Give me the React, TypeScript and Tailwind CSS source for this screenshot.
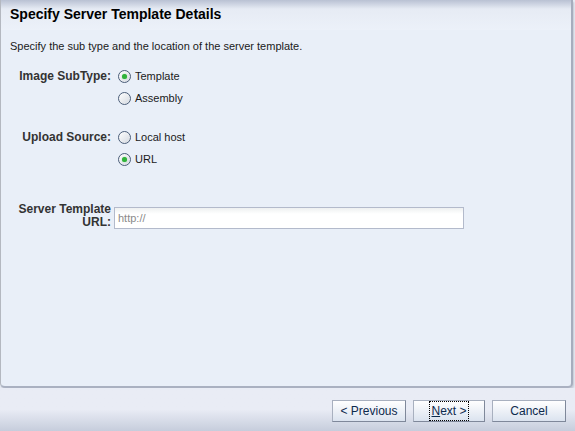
import React, { useState } from 'react';

const font = { fontFamily: '"Liberation Sans", Arial, sans-serif' };

type RadioProps = {
  label: string;
  checked: boolean;
  onSelect: () => void;
};

const Radio: React.FC<RadioProps> = ({ label, checked, onSelect }) => (
  <label className="flex items-center h-[18px] cursor-pointer" onClick={onSelect}>
    <span className="relative w-[13px] h-[13px] rounded-full border border-[#4a5d78] bg-gradient-to-br from-white to-[#d4d9e0] flex items-center justify-center shadow-[inset_0_0_1px_#ffffff]">
      {checked && (
        <span className="w-[5px] h-[5px] rounded-full bg-[#2fb23a] shadow-[0_0_1px_#6ad36f]" />
      )}
    </span>
    <span className="ml-[4px] text-[11px] text-[#1a1a1a]">{label}</span>
  </label>
);

const FooterButton: React.FC<{ width: string; children: React.ReactNode }> = ({ width, children }) => (
  <button
    className={`${width} h-[22px] border border-[#a8b0bf] border-b-[#7f889a] border-r-[#7f889a] bg-gradient-to-b from-white to-[#dbe3ef] text-[12px] text-[#0d2a4d] flex items-center justify-center`}
  >
    {children}
  </button>
);

const App: React.FC = () => {
  const [subType, setSubType] = useState<'template' | 'assembly'>('template');
  const [source, setSource] = useState<'local' | 'url'>('url');

  return (
    <div className="w-[575px] h-[431px] flex flex-col bg-[#e9edf5] overflow-hidden" style={font}>
      {/* wizard page panel */}
      <div className="w-[573px] h-[388px] shrink-0 flex flex-col bg-[#e9eff8] border-l border-r-2 border-b-2 border-l-[#b4b8c0] border-r-[#a6adbd] border-b-[#aab1c1] rounded-b-[5px] shadow-[1px_2px_2px_rgba(120,130,150,0.35)]">
        <div className="h-[30px] shrink-0 bg-gradient-to-b from-[#b9c1d3] via-[#e6ebf4] via-30% to-[#ecf1f9] flex items-end pl-[9px] pb-[9px]">
          <h1 className="text-[14px] font-bold text-black leading-none">Specify Server Template Details</h1>
        </div>

        <p className="mt-[10px] ml-[9px] text-[11px] text-[#1a1a1a] leading-[12px]">
          Specify the sub type and the location of the server template.
        </p>

        <div className="mt-[15px] grid grid-cols-[110px_1fr] gap-x-[7px]">
          <div className="text-right text-[12px] font-bold text-[#333] h-[18px] leading-[18px]">Image SubType:</div>
          <div className="flex flex-col gap-[4px]">
            <Radio label="Template" checked={subType === 'template'} onSelect={() => setSubType('template')} />
            <Radio label="Assembly" checked={subType === 'assembly'} onSelect={() => setSubType('assembly')} />
          </div>

          <div className="mt-[21px] text-right text-[12px] font-bold text-[#333] h-[18px] leading-[18px]">Upload Source:</div>
          <div className="mt-[21px] flex flex-col gap-[4px]">
            <Radio label="Local host" checked={source === 'local'} onSelect={() => setSource('local')} />
            <Radio label="URL" checked={source === 'url'} onSelect={() => setSource('url')} />
          </div>

          <div className="mt-[35px] text-right text-[12px] font-bold text-[#333] leading-[13px] flex flex-col justify-center">
            <span>Server Template</span>
            <span>URL:</span>
          </div>
          <div className="mt-[37px] -ml-[4px]">
            <input
              placeholder="http://"
              className="w-[350px] h-[22px] border border-[#b3bacb] bg-gradient-to-b from-[#eef0f1] via-white via-30% to-white px-[3px] text-[11px] text-[#333] placeholder:text-[#8a8a8a] outline-none"
            />
          </div>
        </div>
      </div>

      {/* wizard buttons */}
      <div className="flex-1 bg-gradient-to-b from-[#e9ecf5] via-[#e9ecf5] via-50% to-[#c6cddc] flex justify-end items-start pt-[12px] pr-[9px] gap-[7px]">
        <FooterButton width="w-[74px]">&lt; Previous</FooterButton>
        <FooterButton width="w-[72px]">
          <span className="outline outline-1 outline-dotted outline-black px-[1px]">
            <span className="underline">N</span>ext &gt;
          </span>
        </FooterButton>
        <FooterButton width="w-[74px]">Cancel</FooterButton>
      </div>
    </div>
  );
};

export default App;
